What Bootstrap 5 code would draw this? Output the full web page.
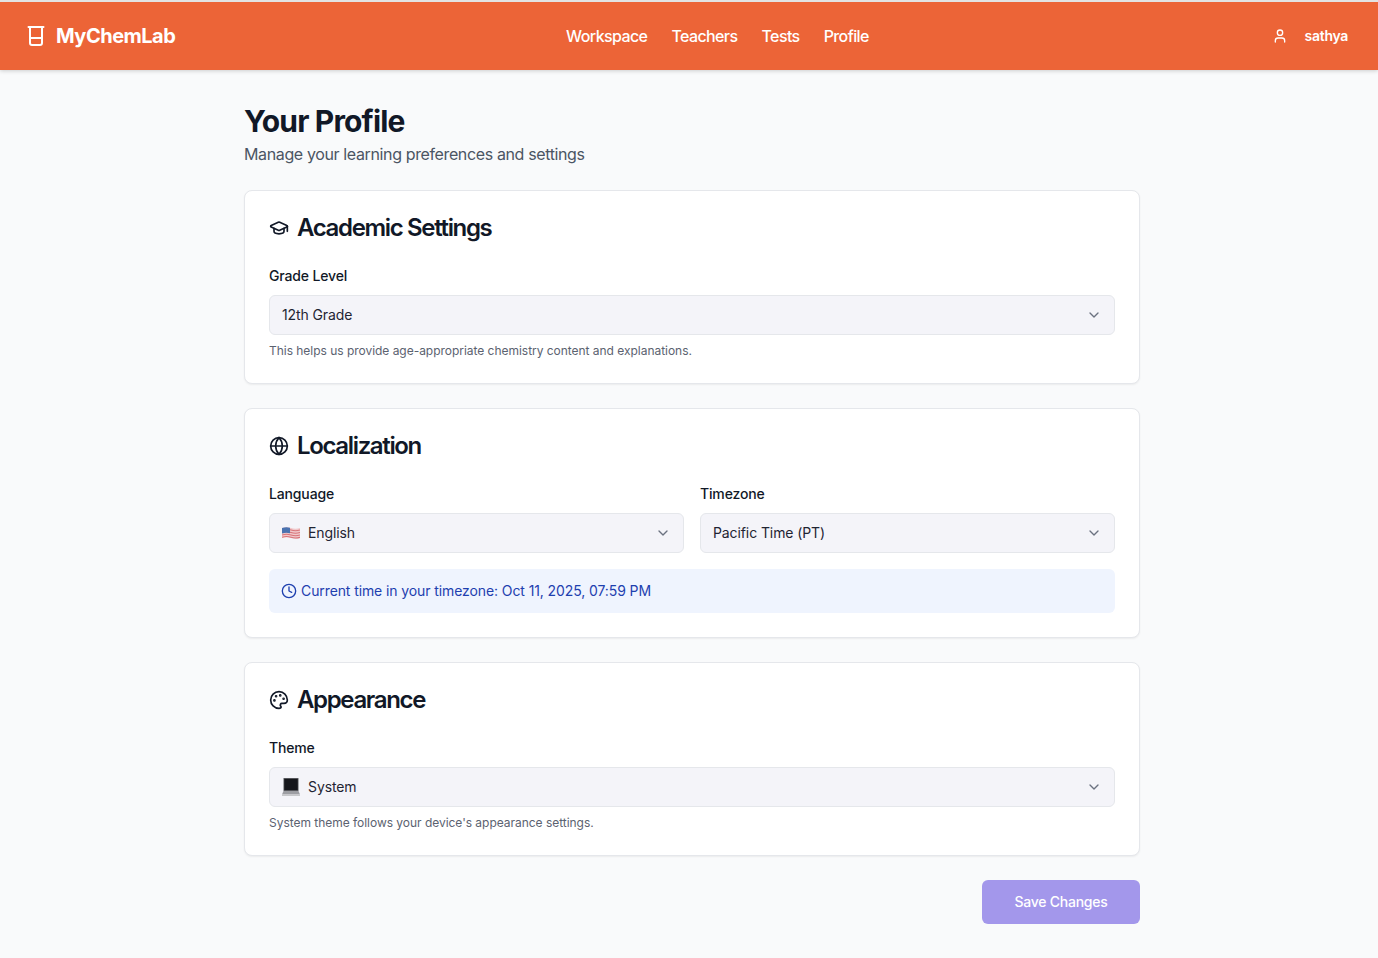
<!DOCTYPE html>
<html lang="en">
<head>
    <meta charset="UTF-8">
    <meta name="viewport" content="width=device-width, initial-scale=1.0">
    <title>MyChemLab - Profile</title>
    <link href="https://cdn.jsdelivr.net/npm/bootstrap@5.3.0/dist/css/bootstrap.min.css" rel="stylesheet">
    <style>
        html, body { height: 958px; overflow: hidden; }
        body {
            font-family: Inter, "Liberation Sans", sans-serif;
            background: #f9fafb;
            color: #111827;
            border-top: 2px solid #e3e3e3;
        }
        .top-bar {
            height: 68px;
            background: #ec6437;
            box-shadow: 0 1px 4px rgba(0, 0, 0, .18);
            padding: 0 30px 0 27px;
        }
        .brand-name { font-size: 20px; font-weight: 700; letter-spacing: -.5px; color: #fff; margin-left: 11px; }
        .top-links { gap: 24px; margin-left: -12px; }
        .top-links a { color: #fff; font-size: 16px; font-weight: 500; text-decoration: none; letter-spacing: -.6px; }
        .user-name { font-size: 14px; font-weight: 600; color: #fff; margin: 0 0 2px 17px; letter-spacing: -.3px; }
        .page-wrap { width: 896px; margin-left: 244px; padding-top: 33px; }
        .page-title { font-size: 30px; line-height: 36px; font-weight: 700; letter-spacing: -.85px; color: #111827; margin: 0 0 3px; }
        .page-sub { font-size: 16px; line-height: 24px; color: #4b5563; letter-spacing: -.37px; margin: 0 0 24px; }
        .panel {
            background: #fff;
            border: 1px solid #e5e7eb;
            border-radius: 8px;
            box-shadow: 0 1px 2px rgba(0, 0, 0, .06);
            padding: 24px;
            margin-bottom: 24px;
        }
        .panel-title { font-size: 24px; line-height: 28px; font-weight: 600; letter-spacing: -1.35px; color: #111827; margin: -1px 0 24px; gap: 8px; }
        .panel-title svg { flex: none; }
        .field-label { display: block; font-size: 14px; line-height: 20px; font-weight: 500; color: #111827; margin-bottom: 9px; letter-spacing: -.15px; }
        .fake-select.form-select {
            height: 40px;
            display: flex;
            align-items: center;
            gap: 8px;
            background-color: #f4f4f9;
            background-image: none;
            border: 1px solid #e5e7eb;
            border-radius: 6px;
            padding: 0 12px;
            font-size: 14px;
            color: #1f2433;
            letter-spacing: -.1px;
        }
        .fake-select span { margin-bottom: 2px; }
        .fake-select .chev { margin-left: auto; flex: none; }
        .help-line { font-size: 12px; line-height: 16px; color: #5b6270; margin: 8px 0 0; letter-spacing: -.03px; }
        .field-cols { display: grid; grid-template-columns: 1fr 1fr; gap: 16px; }
        .time-note {
            margin-top: 16px;
            height: 44px;
            background: #eff4fe;
            border-radius: 6px;
            padding: 0 12px;
            font-size: 14px;
            color: #1e40af;
            gap: 4px;
            letter-spacing: -.1px;
        }
        .time-note span { margin-bottom: 2px; }
        .save-btn.btn {
            width: 158px;
            height: 44px;
            background: #a397eb;
            border: 0;
            border-radius: 6px;
            color: #fff;
            font-size: 14px;
            font-weight: 500;
            padding: 0 0 2px;
            letter-spacing: -.25px;
        }
        .save-btn.btn:disabled { background: #a397eb; color: #fff; opacity: 1; }
    </style>
</head>
<body>
    <nav class="top-bar d-flex align-items-center justify-content-between">
        <div class="d-flex align-items-center">
            <svg width="18" height="20" viewBox="0 0 18 20" fill="none" stroke="#fff" stroke-width="2" stroke-linecap="round" stroke-linejoin="round">
                <path d="M1.500 1h15M3 1v16a2 2 0 0 0 2 2h8a2 2 0 0 0 2-2V1M3 12h12"/>
            </svg>
            <span class="brand-name">MyChemLab</span>
        </div>
        <div class="top-links d-flex align-items-center">
            <a href="#">Workspace</a>
            <a href="#">Teachers</a>
            <a href="#">Tests</a>
            <a href="#">Profile</a>
        </div>
        <div class="d-flex align-items-center justify-content-end">
            <svg width="16" height="16" viewBox="0 0 24 24" fill="none" stroke="#fff" stroke-width="2" stroke-linecap="round" stroke-linejoin="round">
                <path d="M19 21v-2a4 4 0 0 0-4-4H9a4 4 0 0 0-4 4v2"/><circle cx="12" cy="7" r="4"/>
            </svg>
            <span class="user-name">sathya</span>
        </div>
    </nav>

    <main class="page-wrap">
        <h1 class="page-title">Your Profile</h1>
        <p class="page-sub">Manage your learning preferences and settings</p>

        <section class="panel">
            <h2 class="panel-title d-flex align-items-center">
                <svg width="20" height="20" viewBox="0 0 24 24" fill="none" stroke="#111827" stroke-width="2" stroke-linecap="round" stroke-linejoin="round">
                    <path d="M21.420 10.920a1 1 0 0 0-.02-1.840l-8.570-3.900a2 2 0 0 0-1.660 0l-8.570 3.900a1 1 0 0 0 0 1.830l8.570 3.910a2 2 0 0 0 1.660 0z"/><path d="M22 10v6"/><path d="M6 12.500V16a6 3 0 0 0 12 0v-3.500"/>
                </svg>
                Academic Settings
            </h2>
            <label class="field-label">Grade Level</label>
            <div class="form-select fake-select">
                <span>12th Grade</span>
                <svg class="chev" width="16" height="16" viewBox="0 0 24 24" fill="none" stroke="#6b7280" stroke-width="2" stroke-linecap="round" stroke-linejoin="round"><path d="m6 9 6 6 6-6"/></svg>
            </div>
            <p class="help-line">This helps us provide age-appropriate chemistry content and explanations.</p>
        </section>

        <section class="panel">
            <h2 class="panel-title d-flex align-items-center">
                <svg width="20" height="20" viewBox="0 0 24 24" fill="none" stroke="#111827" stroke-width="2" stroke-linecap="round" stroke-linejoin="round">
                    <circle cx="12" cy="12" r="10"/><path d="M12 2a14.500 14.500 0 0 0 0 20 14.500 14.500 0 0 0 0-20"/><path d="M2 12h20"/>
                </svg>
                Localization
            </h2>
            <div class="field-cols">
                <div>
                    <label class="field-label">Language</label>
                    <div class="form-select fake-select">
                        <svg width="18" height="14" viewBox="0 0 18 14">
                            <path d="M0 2q4.500-1.500 9 0t9 0v10q-4.500 1.500-9 0t-9 0z" fill="#f0c8cb"/>
                            <path d="M0 4q4.500-1.500 9 0t9 0M0 6.500q4.500-1.500 9 0t9 0M0 9q4.500-1.500 9 0t9 0M0 11.300q4.500-1.500 9 0t9 0" fill="none" stroke="#d8747a" stroke-width="1.100"/>
                            <path d="M0 2q4-1.300 8-.3v5.500q-4-1-8 .2z" fill="#4a72b0"/>
                        </svg>
                        <span>English</span>
                        <svg class="chev" width="16" height="16" viewBox="0 0 24 24" fill="none" stroke="#6b7280" stroke-width="2" stroke-linecap="round" stroke-linejoin="round"><path d="m6 9 6 6 6-6"/></svg>
                    </div>
                </div>
                <div>
                    <label class="field-label">Timezone</label>
                    <div class="form-select fake-select">
                        <span>Pacific Time (PT)</span>
                        <svg class="chev" width="16" height="16" viewBox="0 0 24 24" fill="none" stroke="#6b7280" stroke-width="2" stroke-linecap="round" stroke-linejoin="round"><path d="m6 9 6 6 6-6"/></svg>
                    </div>
                </div>
            </div>
            <div class="time-note d-flex align-items-center">
                <svg width="16" height="16" viewBox="0 0 24 24" fill="none" stroke="#1e40af" stroke-width="2" stroke-linecap="round" stroke-linejoin="round">
                    <circle cx="12" cy="12" r="10"/><path d="M12 6v6l4 2"/>
                </svg>
                <span>Current time in your timezone: Oct 11, 2025, 07:59 PM</span>
            </div>
        </section>

        <section class="panel">
            <h2 class="panel-title d-flex align-items-center">
                <svg width="20" height="20" viewBox="0 0 24 24" fill="none" stroke="#111827" stroke-width="2" stroke-linecap="round" stroke-linejoin="round">
                    <path d="M12 22a10 10 0 1 1 10-10c0 2.800-2.200 4-4 4h-2.500a2 2 0 0 0-1.500 3.300c.4.500.5 1 .5 1.200 0 .9-1 1.500-2.500 1.500z"/>
                    <circle cx="13.500" cy="6.500" r=".6" fill="#111827"/><circle cx="17.500" cy="10.500" r=".6" fill="#111827"/><circle cx="8.500" cy="7.500" r=".6" fill="#111827"/><circle cx="6.500" cy="12.500" r=".6" fill="#111827"/>
                </svg>
                Appearance
            </h2>
            <label class="field-label">Theme</label>
            <div class="form-select fake-select">
                <svg width="18" height="18" viewBox="0 0 18 18">
                    <rect x="1.500" y="0" width="15" height="13" rx=".6" fill="#55565b"/>
                    <rect x="2.300" y="1" width="13.400" height="11" fill="#15161b"/>
                    <path d="M1.500 13h15l1.500 3.500H0z" fill="#9d9ea3"/>
                    <path d="M0 16.500h18V18H0z" fill="#c6c7ca"/>
                </svg>
                <span>System</span>
                <svg class="chev" width="16" height="16" viewBox="0 0 24 24" fill="none" stroke="#6b7280" stroke-width="2" stroke-linecap="round" stroke-linejoin="round"><path d="m6 9 6 6 6-6"/></svg>
            </div>
            <p class="help-line">System theme follows your device's appearance settings.</p>
        </section>

        <div class="d-flex justify-content-end">
            <button class="btn save-btn" disabled>Save Changes</button>
        </div>
    </main>

    <script src="https://cdn.jsdelivr.net/npm/bootstrap@5.3.0/dist/js/bootstrap.bundle.min.js"></script>
</body>
</html>
